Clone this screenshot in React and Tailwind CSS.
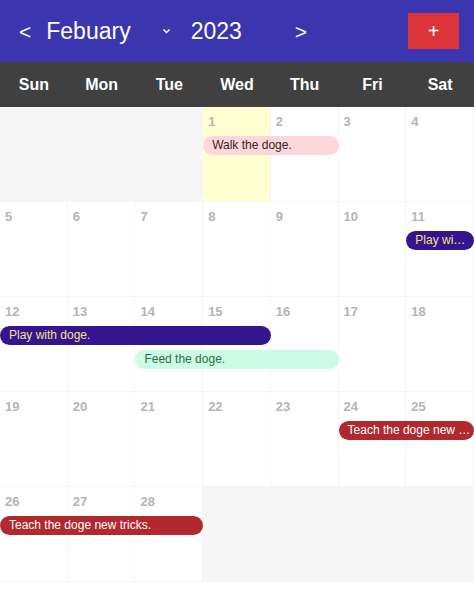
const days = ['Sun', 'Mon', 'Tue', 'Wed', 'Thu', 'Fri', 'Sat'];

const weeks = [
  {
    cells: [null, null, null, 1, 2, 3, 4],
    events: [{ title: 'Walk the doge.', start: 'col-start-4', span: 'col-span-2', row: 'row-start-2', tone: 'bg-[#fdd7da] text-[#3a2226]' }],
  },
  {
    cells: [5, 6, 7, 8, 9, 10, 11],
    events: [{ title: 'Play wi…', start: 'col-start-7', span: 'col-span-1', row: 'row-start-2', tone: 'bg-[#33168f] text-[#f3e27c]' }],
  },
  {
    cells: [12, 13, 14, 15, 16, 17, 18],
    events: [
      { title: 'Play with doge.', start: 'col-start-1', span: 'col-span-4', row: 'row-start-2', tone: 'bg-[#33168f] text-[#f3e27c]' },
      { title: 'Feed the doge.', start: 'col-start-3', span: 'col-span-3', row: 'row-start-3', tone: 'bg-[#cbfbe4] text-[#2d7046]' },
    ],
  },
  {
    cells: [19, 20, 21, 22, 23, 24, 25],
    events: [{ title: 'Teach the doge new …', start: 'col-start-6', span: 'col-span-2', row: 'row-start-2', tone: 'bg-[#b1282f] text-white' }],
  },
  {
    cells: [26, 27, 28, null, null, null, null],
    events: [{ title: 'Teach the doge new tricks.', start: 'col-start-1', span: 'col-span-3', row: 'row-start-2', tone: 'bg-[#b1282f] text-white' }],
  },
];

const colStarts = ['col-start-1', 'col-start-2', 'col-start-3', 'col-start-4', 'col-start-5', 'col-start-6', 'col-start-7'];

function Week({ week }) {
  return (
    <div className="grid h-[95px] grid-cols-7 grid-rows-[29px_24px_24px_1fr]">
      {week.cells.map((d, i) => (
        <div
          key={i}
          className={`${colStarts[i]} row-span-full border-r border-b px-[5px] pt-[5px] text-[13px] font-bold text-[#b4b4b4] ${
            d === null ? 'border-[#f6f6f6] bg-[#f6f6f6]' : d === 1 ? 'border-[#f4f4f4] bg-[#ffffd2]' : 'border-[#f4f4f4] bg-white'
          }`}
        >
          {d}
        </div>
      ))}
      {week.events.map((e) => (
        <div
          key={e.title}
          className={`${e.start} ${e.span} ${e.row} z-10 h-[19px] self-start overflow-hidden whitespace-nowrap rounded-full pl-[9px] pr-[4px] text-[12px] leading-[19px] ${e.tone}`}
        >
          {e.title}
        </div>
      ))}
    </div>
  );
}

export default function App() {
  return (
    <div className="h-[591px] w-[474px] bg-white font-['Liberation_Sans',Arial,sans-serif]">
      <header className="flex h-[62px] items-center bg-[#3b35af] pl-[19px] pr-[15px] text-white">
        <span className="text-[21px] leading-none">&lt;</span>
        <span className="ml-[15px] text-[23px] leading-none">Febuary</span>
        <svg className="ml-[31px]" width="9" height="6" viewBox="0 0 9 6">
          <path d="M1.5 1.5 L4.5 4.5 L7.5 1.5" fill="none" stroke="white" strokeWidth="1.5" />
        </svg>
        <span className="ml-[20px] text-[23px] leading-none">2023</span>
        <span className="ml-[53px] text-[21px] leading-none">&gt;</span>
        <button className="ml-auto flex h-[36px] w-[51px] items-center justify-center bg-[#db3539] text-[20px] leading-none text-white">
          +
        </button>
      </header>
      <div className="grid h-[45px] grid-cols-7 items-center bg-[#404040] text-center text-[16px] font-bold text-white">
        {days.map((d) => (
          <div key={d}>{d}</div>
        ))}
      </div>
      {weeks.map((w, i) => (
        <Week key={i} week={w} />
      ))}
    </div>
  );
}
